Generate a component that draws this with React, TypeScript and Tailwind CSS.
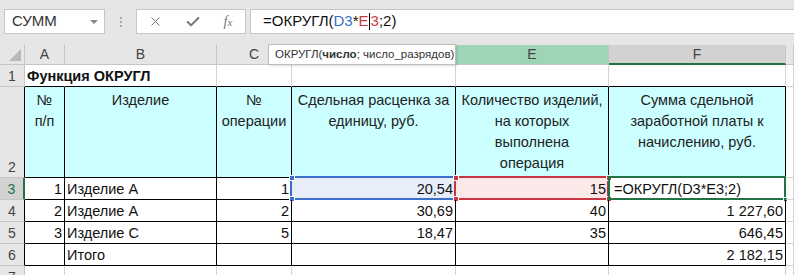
import { Fragment } from 'react'
import { X, Check } from 'lucide-react'

const FONT = { fontFamily: '"Liberation Sans", Arial, sans-serif' }

const GRID = 'border-[#d4d4d4]'
const TBL = 'border-black'

function Head({ label, className = '' }: { label: string; className?: string }) {
  return (
    <div className={`flex items-center justify-center border-r border-b border-[#c6c6c6] bg-[#e6e6e6] text-[14px] text-[#444] ${className}`}>
      {label}
    </div>
  )
}

function RowHead({ label, className = '' }: { label: string; className?: string }) {
  return (
    <div className={`flex items-end justify-center border-r border-b border-[#c6c6c6] bg-[#e6e6e6] pb-[1px] text-[14px] leading-[18px] text-[#444] ${className}`}>
      {label}
    </div>
  )
}

function Cell({
  children,
  className = '',
  align = 'left',
}: {
  children?: React.ReactNode
  className?: string
  align?: 'left' | 'right'
}) {
  return (
    <div
      className={`relative flex items-end border-r border-b px-[2px] text-[14.5px] leading-[20px] whitespace-nowrap ${
        align === 'right' ? 'justify-end' : 'justify-start'
      } ${className}`}
    >
      {children}
    </div>
  )
}

function HeaderCell({ children }: { children: React.ReactNode }) {
  return (
    <div className={`border-r border-b ${TBL} bg-[#ccffff] px-[2px] pt-[3px] text-center text-[14.5px] leading-[21px] text-[#222]`}>
      {children}
    </div>
  )
}

function Handle({ className }: { className: string }) {
  return <span className={`absolute h-[6px] w-[6px] border border-white ${className}`} />
}

export default function App() {
  const rows = [
    { n: '4', a: '2', b: 'Изделие А', c: '2', d: '30,69', e: '40', f: '1 227,60' },
    { n: '5', a: '3', b: 'Изделие С', c: '5', d: '18,47', e: '35', f: '646,45' },
    { n: '6', a: '', b: 'Итого', c: '', d: '', e: '', f: '2 182,15' },
  ]

  return (
    <div className="h-[275px] w-[794px] overflow-hidden bg-white text-[#111]" style={FONT}>
      {/* formula bar */}
      <div className="flex h-[45px] items-start bg-[#e6e6e6] pt-[9px]">
        <div className="ml-[4px] flex h-[25px] w-[101px] items-center justify-between border border-[#c6c6c6] bg-white pl-[7px] pr-[6px] text-[15px] text-[#333]">
          <span>СУММ</span>
          <span className="h-0 w-0 border-x-[4px] border-t-[4px] border-x-transparent border-t-[#888]" />
        </div>
        <div className="flex h-[25px] w-[31px] flex-col items-center justify-center gap-[2px]">
          <span className="h-[2px] w-[2px] bg-[#aaa]" />
          <span className="h-[2px] w-[2px] bg-[#aaa]" />
          <span className="h-[2px] w-[2px] bg-[#aaa]" />
        </div>
        <div className="flex h-[25px] w-[110px] items-center border border-[#c6c6c6] bg-white text-[#777]">
          <div className="flex w-[37px] justify-center">
            <X size={15} strokeWidth={1.6} />
          </div>
          <div className="flex w-[37px] justify-center">
            <Check size={16} strokeWidth={3} />
          </div>
          <div className="flex w-[34px] justify-center">
            <span className="text-[14px] italic" style={{ fontFamily: '"Liberation Serif", serif' }}>
              f<span className="text-[11px]">x</span>
            </span>
          </div>
        </div>
        <div className="ml-[4px] flex h-[25px] flex-1 items-center border-y border-l border-[#c6c6c6] bg-white pl-[12px] text-[15px]">
          <span>=ОКРУГЛ(</span>
          <span className="text-[#3a70c8]">D3</span>
          <span>*</span>
          <span className="text-[#d03a3a]">E</span>
          <span className="mx-[0.5px] h-[17px] w-px bg-black" />
          <span className="text-[#d03a3a]">3</span>
          <span>;2)</span>
        </div>
      </div>

      {/* sheet */}
      <div className="relative grid grid-cols-[25px_40px_152px_75px_164px_153px_177px_1fr] grid-rows-[20px_22px_91px_22px_22px_22px_22px_22px]">
        {/* column headers */}
        <div className="relative border-r border-b border-[#c6c6c6] bg-[#e6e6e6]">
          <svg className="absolute bottom-[3px] right-[3px]" width="12" height="12" viewBox="0 0 12 12">
            <polygon points="12,0 12,12 0,12" fill="#b7b7b7" />
          </svg>
        </div>
        <Head label="A" />
        <Head label="B" />
        <Head label="C" />
        <Head label="D" />
        <Head label="E" className="!bg-[#9fd5b7] text-[#222]" />
        <Head label="F" className="!border-b-2 !border-b-[#217346] !bg-[#d2d2d2] text-[#1e5e3a]" />
        <Head label="" />

        {/* row 1 */}
        <RowHead label="1" />
        <Cell className="z-10 border-r-transparent border-b-black font-bold">Функция ОКРУГЛ</Cell>
        <Cell className={`${GRID} border-b-black`} />
        <Cell className={`${GRID} border-b-black`} />
        <Cell className={`${GRID} border-b-black`} />
        <Cell className={`${GRID} border-b-black`} />
        <Cell className={`${GRID} border-b-black`} />
        <Cell className={GRID} />

        {/* row 2 */}
        <RowHead label="2" className="!border-r-black" />
        <HeaderCell>
          №<br />п/п
        </HeaderCell>
        <HeaderCell>Изделие</HeaderCell>
        <HeaderCell>
          №<br />операции
        </HeaderCell>
        <HeaderCell>
          Сдельная расценка за
          <br />
          единицу, руб.
        </HeaderCell>
        <HeaderCell>
          Количество изделий,
          <br />
          на которых
          <br />
          выполнена
          <br />
          операция
        </HeaderCell>
        <HeaderCell>
          Сумма сдельной
          <br />
          заработной платы к
          <br />
          начислению, руб.
        </HeaderCell>
        <Cell className={GRID} />

        {/* row 3 */}
        <RowHead label="3" className="!border-r-2 !border-r-[#217346] !bg-[#d2d2d2] text-[#217346]" />
        <Cell className={TBL} align="right">1</Cell>
        <Cell className={TBL}>Изделие А</Cell>
        <Cell className={TBL} align="right">1</Cell>
        <Cell className={`${TBL} bg-[#e8eef9]`} align="right">
          <span className="absolute -left-[2px] -top-[2px] -right-px -bottom-px border-2 border-[#3a70c8]" />
          <Handle className="-left-[3px] -top-[3px] bg-[#3a70c8]" />
          <Handle className="-left-[3px] -bottom-[3px] bg-[#3a70c8]" />
          <span className="relative">20,54</span>
        </Cell>
        <Cell className={`${TBL} bg-[#fbe8e8]`} align="right">
          <span className="absolute -left-[2px] -top-[2px] -right-px -bottom-px border-2 border-[#c8373f]" />
          <Handle className="-left-[3px] -top-[3px] bg-[#c8373f]" />
          <Handle className="-left-[3px] -bottom-[3px] bg-[#c8373f]" />
          <Handle className="-right-[4px] -top-[3px] bg-[#c8373f]" />
          <Handle className="-right-[4px] -bottom-[3px] bg-[#c8373f]" />
          <span className="relative">15</span>
        </Cell>
        <Cell className={TBL}>
          <span className="absolute -left-[1px] -top-[2px] -right-px -bottom-px border-2 border-[#217346]" />
          <span className="absolute -right-[3px] -bottom-[3px] h-[5px] w-[5px] border border-white bg-[#217346]" />
          <span className="relative pl-[3px]">=ОКРУГЛ(D3*E3;2)</span>
        </Cell>
        <Cell className={GRID} />

        {/* rows 4-6 */}
        {rows.map((r) => (
          <Fragment key={r.n}>
            <RowHead label={r.n} className="!border-r-black" />
            <Cell className={TBL} align="right">{r.a}</Cell>
            <Cell className={TBL}>{r.b}</Cell>
            <Cell className={TBL} align="right">{r.c}</Cell>
            <Cell className={TBL} align="right">{r.d}</Cell>
            <Cell className={TBL} align="right">{r.e}</Cell>
            <Cell className={TBL} align="right">{r.f}</Cell>
            <Cell className={GRID} />
          </Fragment>
        ))}

        {/* row 7 */}
        <RowHead label="7" />
        <Cell className={GRID} />
        <Cell className={GRID} />
        <Cell className={GRID} />
        <Cell className={GRID} />
        <Cell className={GRID} />
        <Cell className={GRID} />
        <Cell className={GRID} />

        {/* function tooltip */}
        <div className="absolute left-[268px] top-[-1px] z-20 flex h-[21px] w-[188px] items-center border border-[#bdbdbd] bg-white pl-[6px] text-[11.5px] whitespace-nowrap text-[#333] shadow-[1px_1px_2px_rgba(0,0,0,0.15)]">
          <span>
            ОКРУГЛ(<b>число</b>; число_разрядов)
          </span>
        </div>
      </div>
    </div>
  )
}
